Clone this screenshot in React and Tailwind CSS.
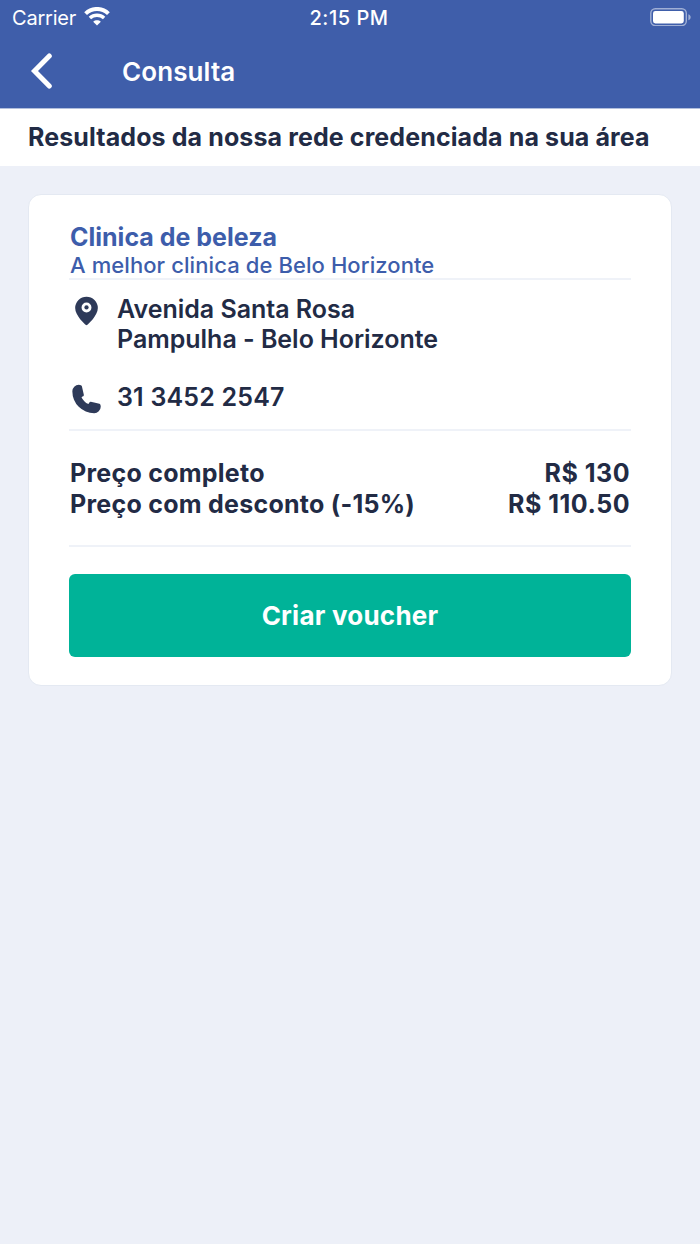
const StatusBar = () => (
  <div className="grid h-9 grid-cols-3 items-center pl-3 pr-2 text-white">
    <div className="flex items-center gap-2">
      <span className="text-[20px] leading-6 tracking-[-0.2px]">Carrier</span>
      <svg className="-mt-[3px] h-[19px] w-[26px] shrink-0" viewBox="0 0 26 19" fill="none" stroke="currentColor">
        <path d="M1.6 6.6C8 .4 18 .4 24.4 6.6" strokeWidth="4" />
        <path d="M5.9 11.1C9.9 7.3 16.1 7.3 20.1 11.1" strokeWidth="3.4" />
        <path d="M13 18.6L9.2 14.7C11.4 12.8 14.6 12.8 16.8 14.7Z" fill="currentColor" stroke="none" />
      </svg>
    </div>
    <span className="-ml-1.5 text-center text-[20px] font-medium leading-6 tracking-[0.5px]">2:15 PM</span>
    <svg className="-mt-0.5 h-[18px] w-[42px] justify-self-end" viewBox="0 0 42 18" fill="none">
      <rect x="0.8" y="0.8" width="35.5" height="16.8" rx="4.5" stroke="white" strokeOpacity="0.5" strokeWidth="1.4" />
      <rect x="3" y="3" width="30.8" height="12.4" rx="2.4" fill="white" />
      <path d="M38.4 6.2C41.4 7.2 41.4 11.2 38.4 12.2Z" fill="white" fillOpacity="0.5" />
    </svg>
  </div>
);

const Header = () => (
  <div className="flex h-[70px] items-center pl-[30px] text-white">
    <svg className="h-9 w-6" viewBox="0 0 24 36" fill="none" stroke="currentColor" strokeWidth="5" strokeLinecap="round">
      <path d="M19.3 3L4.5 18L19.3 33" />
    </svg>
    <h1 className="ml-[68px] pt-px text-[26px] font-semibold leading-8 tracking-[0.1px]">Consulta</h1>
  </div>
);

const PinIcon = () => (
  <svg className="h-[34px] w-[35px] shrink-0" viewBox="0 0 24 24" fill="#2e3a59">
    <circle cx="12" cy="9.5" r="1.5" />
    <path d="M12 2a8 8 0 0 0-8 7.92c0 5.48 7.05 11.58 7.35 11.84a1 1 0 0 0 1.3 0C13 21.5 20 15.4 20 9.92A8 8 0 0 0 12 2zm0 11a3.5 3.5 0 1 1 3.5-3.5A3.5 3.5 0 0 1 12 13z" />
  </svg>
);

const PhoneIcon = () => (
  <svg className="h-[34px] w-[35px] shrink-0" viewBox="0 0 24 24" fill="#2e3a59">
    <path d="M17.4 22A15.42 15.42 0 0 1 2 6.6 4.6 4.6 0 0 1 6.6 2a3.94 3.94 0 0 1 .77.07 3.79 3.79 0 0 1 .72.18 1 1 0 0 1 .65.75l1.37 6a1 1 0 0 1-.26.92c-.13.14-.14.15-1.37.79a9.91 9.91 0 0 0 4.87 4.89c.65-1.24.66-1.25.8-1.38a1 1 0 0 1 .92-.26l6 1.37a1 1 0 0 1 .72.65 4.34 4.34 0 0 1 .19.73 4.77 4.77 0 0 1 .06.76A4.6 4.6 0 0 1 17.4 22z" />
  </svg>
);

const prices = [
  { label: 'Preço completo', value: 'R$ 130' },
  { label: 'Preço com desconto (-15%)', value: 'R$ 110.50' },
];

const ClinicCard = () => (
  <div className="mx-7 mt-7 h-[492px] rounded-[13px] border border-[#e4e9f2] bg-white px-10 pt-[27px]">
    <h3 className="whitespace-nowrap pl-px text-[25px] font-bold leading-[30px] text-[#3d5dab]">Clinica de beleza</h3>
    <p className="whitespace-nowrap pl-px text-[22px] font-medium leading-[27px] tracking-[0.09px] text-[#3d5dab]">
      A melhor clinica de Belo Horizonte
    </p>

    {/* Address and phone */}
    <div className="-mt-px h-[153px] border-y-2 border-[#eff2f8] pt-[14px]">
      <div className="flex gap-[13px]">
        <PinIcon />
        <p className="whitespace-nowrap text-[25px] font-semibold leading-[30px] tracking-[-0.02px]">
          Avenida Santa Rosa
          <br />
          Pampulha - Belo Horizonte
        </p>
      </div>
      <div className="mt-7 flex gap-[13px]">
        <PhoneIcon />
        <p className="text-[25px] font-semibold leading-[30px] tracking-[0.2px]">31 3452 2547</p>
      </div>
    </div>

    {/* Prices */}
    <div className="h-[116px] border-b-2 border-[#eff2f8] pt-[27px]">
      {prices.map((price) => (
        <div key={price.label} className="flex justify-between whitespace-nowrap px-px text-[25px] font-bold leading-[30.5px]">
          <span className="tracking-[0.26px]">{price.label}</span>
          <span className="tracking-[0.5px]">{price.value}</span>
        </div>
      ))}
    </div>

    <button className="mt-[27px] h-[83px] w-full rounded-md bg-[#00b398] text-[26px] font-bold tracking-[0.23px] text-white">
      Criar voucher
    </button>
  </div>
);

const App = () => {
  return (
    <div className="min-h-screen bg-[#edf0f8] font-['Inter',sans-serif] text-[#222b45]">
      <div className="h-[108px] bg-[#3f5eaa]">
        <StatusBar />
        <Header />
      </div>
      <div className="flex h-[58px] items-center border-t border-[#b2bfdd] bg-white pl-7 pt-px">
        <h2 className="whitespace-nowrap text-[25px] font-bold tracking-[0.11px]">Resultados da nossa rede credenciada na sua área</h2>
      </div>
      <ClinicCard />
    </div>
  );
};

export default App;
